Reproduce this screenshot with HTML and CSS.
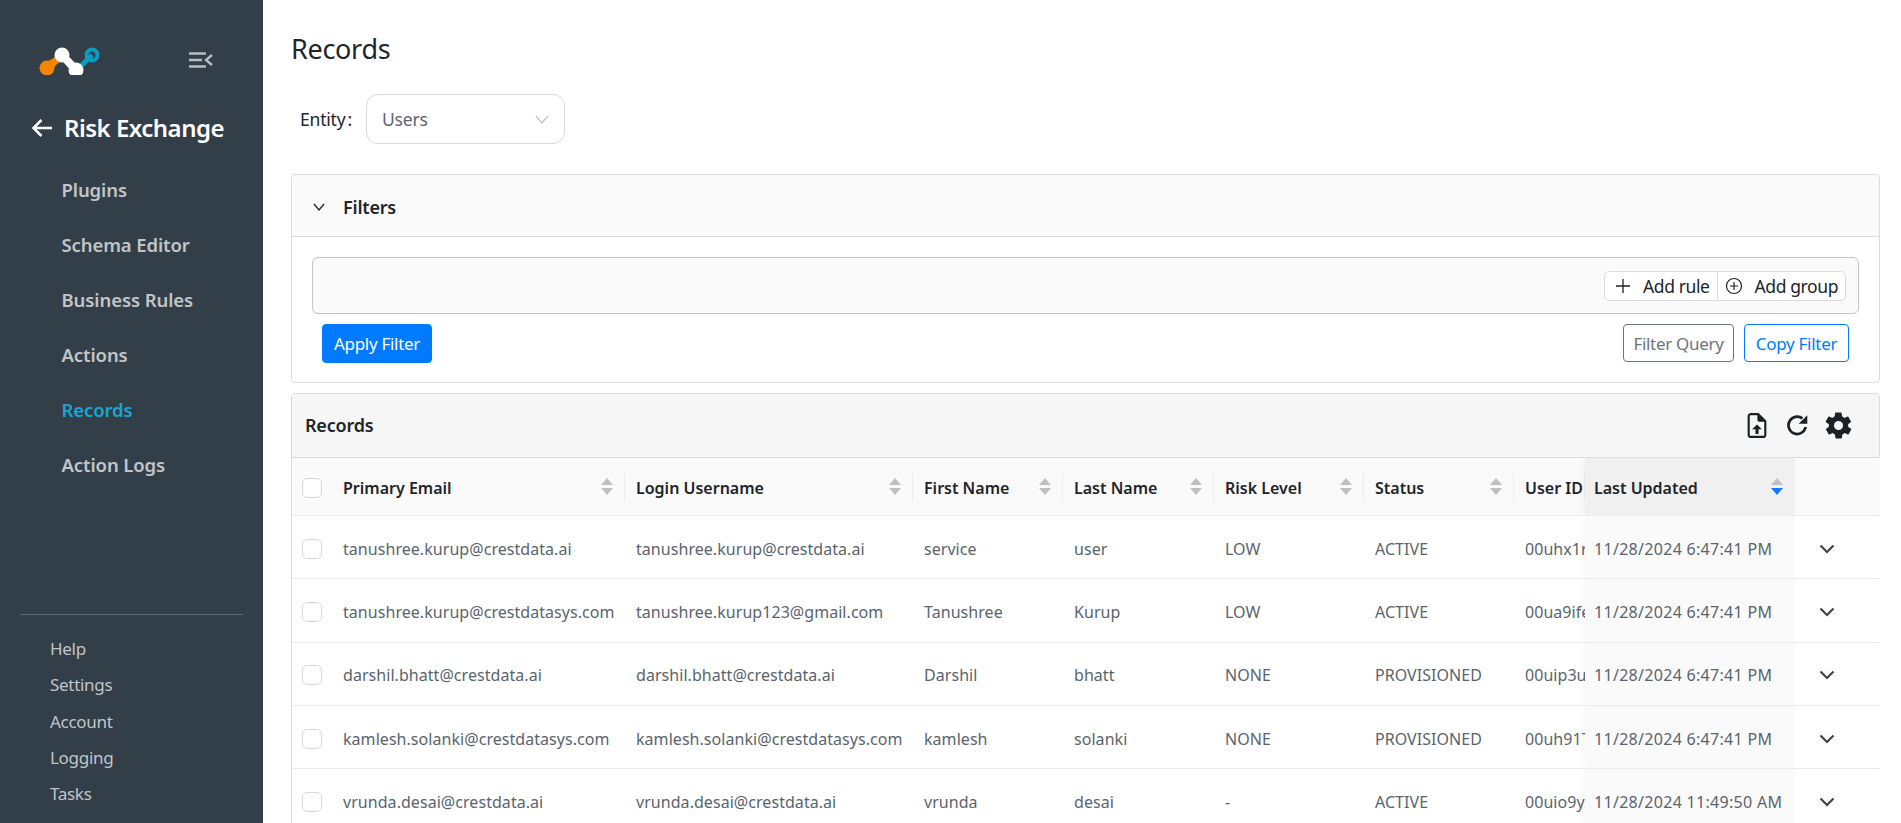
FILE: index.html
```html
<!DOCTYPE html>
<html lang="en">
<head>
<meta charset="utf-8">
<title>Records</title>
<link rel="stylesheet" href="styles.css">
</head>
<body>
<div class="app">
  <aside class="sidebar">
    <div class="brand">
      <svg class="logo" viewBox="0 0 62 30" width="62" height="30">
        <path d="M3.500 17 Q10 17 17 11 L21 17 Q14 21 13.500 28 Z" fill="#f58400"/>
        <circle cx="8" cy="23" r="7.500" fill="#f58400"/>
        <path d="M53 10 L42 21" stroke="#0a9dc4" stroke-width="5" fill="none"/>
        <circle cx="53" cy="10" r="5.500" fill="none" stroke="#0a9dc4" stroke-width="4"/>
        <path d="M23 10 L37 25" stroke="#fff" stroke-width="8" fill="none"/>
        <circle cx="23" cy="10" r="7.500" fill="#fff"/>
        <circle cx="37" cy="25" r="7.500" fill="#fff"/>
      </svg>
      <svg class="collapse" viewBox="0 0 24 16" width="24" height="16">
        <path d="M0 1.500H17M0 8H13M0 14.500H17" stroke="#b9bdc0" stroke-width="2.500" fill="none"/>
        <path d="M23 3 L17 8 L23 13" stroke="#b9bdc0" stroke-width="2.400" fill="none"/>
      </svg>
    </div>
    <div class="section-title">
      <svg viewBox="0 0 22 20" width="22" height="20"><path d="M21 10H2.500M10.500 2L2.500 10L10.500 18" stroke="#fff" stroke-width="2.500" fill="none"/></svg>
      <span>Risk Exchange</span>
    </div>
    <nav class="nav">
      <a class="nav-item">Plugins</a>
      <a class="nav-item">Schema Editor</a>
      <a class="nav-item">Business Rules</a>
      <a class="nav-item">Actions</a>
      <a class="nav-item active">Records</a>
      <a class="nav-item">Action Logs</a>
    </nav>
    <div class="secondary">
      <a class="sub-item">Help</a>
      <a class="sub-item">Settings</a>
      <a class="sub-item">Account</a>
      <a class="sub-item">Logging</a>
      <a class="sub-item">Tasks</a>
      <a class="sub-item">Vendors</a>
    </div>
  </aside>
  <main class="main">
    <h1 class="page-title">Records</h1>
    <div class="entity-row">
      <label class="entity-label">Entity<span class="colon">:</span></label>
      <div class="select">
        <span>Users</span>
        <svg viewBox="0 0 14 9" width="14" height="9"><path d="M1 1L7 8L13 1" stroke="#c4c4c4" stroke-width="1.200" fill="none"/></svg>
      </div>
    </div>
    <section class="card filters">
      <header class="filters-head">
        <svg viewBox="0 0 12 8" width="12" height="8"><path d="M1 1L6 7L11 1" stroke="#222" stroke-width="1.300" fill="none"/></svg>
        <span>Filters</span>
      </header>
      <div class="filters-body">
        <div class="query">
          <div class="btn-group">
            <button class="group-btn">
              <svg viewBox="0 0 16 16" width="16" height="16"><path d="M8 1V15M1 8H15" stroke="#222" stroke-width="1.300" fill="none"/></svg>
              <span>Add rule</span>
            </button>
            <button class="group-btn">
              <svg viewBox="0 0 18 18" width="18" height="18"><circle cx="9" cy="9" r="7.500" stroke="#222" stroke-width="1.200" fill="none"/><path d="M9 5V13M5 9H13" stroke="#222" stroke-width="1.200" fill="none"/></svg>
              <span>Add group</span>
            </button>
          </div>
        </div>
        <div class="filter-actions">
          <button class="btn primary">Apply Filter</button>
          <div class="filter-right">
            <button class="btn outline-grey">Filter Query</button>
            <button class="btn outline-blue">Copy Filter</button>
          </div>
        </div>
      </div>
    </section>
    <section class="card records">
      <header class="records-head">
        <span class="records-title">Records</span>
        <div class="tools">
          <svg class="tool-file" viewBox="0 0 384 512" width="20" height="25"><path fill="#1d2125" d="M64 0C29 0 0 29 0 64v384c0 35 29 64 64 64h256c35 0 64-29 64-64V160L224 0H64zm0 44h136v96c0 22 18 40 40 40h100v268c0 11-9 20-20 20H64c-11 0-20-9-20-20V64c0-11 9-20 20-20zm128 190L92 334h68v96h64v-96h68L192 234z"/></svg>
          <svg class="tool-refresh" viewBox="0 0 24 24" width="26" height="26"><path fill="none" stroke="#1d2125" stroke-width="2.500" d="M20 13a8 8 0 1 1-3-8"/><path fill="#1d2125" d="M21.500 2v8h-8z"/></svg>
          <svg viewBox="0 0 24 24" width="31" height="31"><path fill="#1d2125" d="M19.400 13c.1-.3.1-.7.1-1s0-.7-.1-1l2.100-1.600c.2-.2.200-.4.100-.6l-2-3.500c-.1-.2-.4-.3-.6-.2l-2.500 1c-.5-.4-1.100-.7-1.700-1l-.4-2.600c0-.3-.2-.5-.5-.5h-4c-.2 0-.5.200-.5.400l-.4 2.700c-.6.200-1.200.6-1.700 1l-2.500-1c-.2-.1-.5 0-.6.200l-2 3.500c-.1.200-.1.500.1.600L4.600 11c0 .3-.1.700-.1 1s0 .7.100 1l-2.100 1.600c-.2.200-.2.400-.1.600l2 3.500c.1.200.4.300.6.200l2.500-1c.5.400 1.100.700 1.700 1l.4 2.600c0 .3.300.5.500.5h4c.2 0 .5-.2.500-.4l.4-2.700c.6-.2 1.200-.6 1.700-1l2.500 1c.2.100.5 0 .6-.2l2-3.500c.1-.2.100-.5-.1-.6L19.400 13zM12 15.500a3.500 3.500 0 1 1 0-7 3.500 3.500 0 0 1 0 7z"/></svg>
        </div>
      </header>
      <div class="table">
        <div class="row head">
          <div class="cell check"><span class="box"></span></div>
          <div class="cell email"><b>Primary Email</b><i class="sort"></i></div>
          <div class="cell login"><b>Login Username</b><i class="sort"></i></div>
          <div class="cell first"><b>First Name</b><i class="sort"></i></div>
          <div class="cell last"><b>Last Name</b><i class="sort"></i></div>
          <div class="cell risk"><b>Risk Level</b><i class="sort"></i></div>
          <div class="cell status"><b>Status</b><i class="sort"></i></div>
          <div class="cell uid"><b>User ID</b></div>
          <div class="cell updated sorted"><b>Last Updated</b><i class="sort desc"></i></div>
          <div class="cell more"></div>
        </div>
        <div class="row">
          <div class="cell check"><span class="box"></span></div>
          <div class="cell email">tanushree.kurup@crestdata.ai</div>
          <div class="cell login">tanushree.kurup@crestdata.ai</div>
          <div class="cell first">service</div>
          <div class="cell last">user</div>
          <div class="cell risk">LOW</div>
          <div class="cell status">ACTIVE</div>
          <div class="cell uid">00uhx1rk8dGb</div>
          <div class="cell updated">11/28/2024 6:47:41 PM</div>
          <div class="cell more"><svg viewBox="0 0 16 10" width="16" height="10"><path d="M1.500 1.500L8 8L14.500 1.500" stroke="#444" stroke-width="2.200" fill="none"/></svg></div>
        </div>
        <div class="row">
          <div class="cell check"><span class="box"></span></div>
          <div class="cell email">tanushree.kurup@crestdatasys.com</div>
          <div class="cell login">tanushree.kurup123@gmail.com</div>
          <div class="cell first">Tanushree</div>
          <div class="cell last">Kurup</div>
          <div class="cell risk">LOW</div>
          <div class="cell status">ACTIVE</div>
          <div class="cell uid">00ua9ifeX2bk</div>
          <div class="cell updated">11/28/2024 6:47:41 PM</div>
          <div class="cell more"><svg viewBox="0 0 16 10" width="16" height="10"><path d="M1.500 1.500L8 8L14.500 1.500" stroke="#444" stroke-width="2.200" fill="none"/></svg></div>
        </div>
        <div class="row">
          <div class="cell check"><span class="box"></span></div>
          <div class="cell email">darshil.bhatt@crestdata.ai</div>
          <div class="cell login">darshil.bhatt@crestdata.ai</div>
          <div class="cell first">Darshil</div>
          <div class="cell last">bhatt</div>
          <div class="cell risk">NONE</div>
          <div class="cell status">PROVISIONED</div>
          <div class="cell uid">00uip3uXk2Lm</div>
          <div class="cell updated">11/28/2024 6:47:41 PM</div>
          <div class="cell more"><svg viewBox="0 0 16 10" width="16" height="10"><path d="M1.500 1.500L8 8L14.500 1.500" stroke="#444" stroke-width="2.200" fill="none"/></svg></div>
        </div>
        <div class="row">
          <div class="cell check"><span class="box"></span></div>
          <div class="cell email">kamlesh.solanki@crestdatasys.com</div>
          <div class="cell login">kamlesh.solanki@crestdatasys.com</div>
          <div class="cell first">kamlesh</div>
          <div class="cell last">solanki</div>
          <div class="cell risk">NONE</div>
          <div class="cell status">PROVISIONED</div>
          <div class="cell uid">00uh91Tk2Lm</div>
          <div class="cell updated">11/28/2024 6:47:41 PM</div>
          <div class="cell more"><svg viewBox="0 0 16 10" width="16" height="10"><path d="M1.500 1.500L8 8L14.500 1.500" stroke="#444" stroke-width="2.200" fill="none"/></svg></div>
        </div>
        <div class="row">
          <div class="cell check"><span class="box"></span></div>
          <div class="cell email">vrunda.desai@crestdata.ai</div>
          <div class="cell login">vrunda.desai@crestdata.ai</div>
          <div class="cell first">vrunda</div>
          <div class="cell last">desai</div>
          <div class="cell risk">-</div>
          <div class="cell status">ACTIVE</div>
          <div class="cell uid">00uio9yXk2Lm</div>
          <div class="cell updated">11/28/2024 11:49:50 AM</div>
          <div class="cell more"><svg viewBox="0 0 16 10" width="16" height="10"><path d="M1.500 1.500L8 8L14.500 1.500" stroke="#444" stroke-width="2.200" fill="none"/></svg></div>
        </div>
      </div>
    </section>
  </main>
</div>
</body>
</html>
```
FILE: styles.css
```css
* { box-sizing: border-box; }
html, body { margin: 0; height: 100%; overflow: hidden; background: #fff; }
body { font-family: "Noto Sans", "Open Sans", sans-serif; font-size: 16px; color: #212529; }
.app { display: flex; height: 823px; overflow: hidden; }

.sidebar { width: 263px; flex: none; background: #323e48; display: flex; flex-direction: column; overflow: hidden; position: relative; }
.brand { display: flex; align-items: center; height: 30px; margin: 45px 0 0 39px; }
.collapse { margin-left: 88px; }
.section-title { display: flex; align-items: center; gap: 11px; margin: 37px 0 0 31px; color: #fff; font-size: 24px; font-weight: 600; line-height: 32px; letter-spacing: -0.5px; }
.nav { display: flex; flex-direction: column; margin-top: 18px; padding-left: 61.500px; }
.nav-item { height: 55px; line-height: 55px; font-size: 18.500px; font-weight: 600; color: #c2c5c7; letter-spacing: -0.1px; }
.nav-item.active { color: #1aa6cf; }
.secondary { position: absolute; left: 20px; right: 20px; top: 614px; border-top: 1px solid #5d6872; padding: 16px 0 0 30px; display: flex; flex-direction: column; }
.sub-item { height: 36.300px; line-height: 36.300px; font-size: 17px; color: #c2c5c7; letter-spacing: -0.3px; }

.main { flex: 1; min-width: 0; padding: 30px 21px 0 28px; overflow: hidden; }
.page-title { margin: 0; font-size: 27px; font-weight: 400; line-height: 38px; color: #212529; letter-spacing: -0.3px; }
.entity-row { display: flex; align-items: center; margin: 26px 0 0 9px; height: 50px; }
.entity-label { font-size: 17.500px; width: 66px; letter-spacing: -0.2px; }
.colon { margin-left: 2px; }
.select { width: 199px; height: 50px; border: 1px solid #d9d9d9; border-radius: 12px; display: flex; align-items: center; justify-content: space-between; padding: 0 15px; color: #5c6670; font-size: 17.500px; letter-spacing: -0.2px; }

.card { border: 1px solid #dcdcdc; border-radius: 4px; background: #fff; }
.filters { margin-top: 30px; height: 209px; }
.filters-head { height: 62px; background: #fafafa; border-bottom: 1px solid #dcdcdc; border-radius: 4px 4px 0 0; display: flex; align-items: center; gap: 18px; padding: 2px 0 0 21px; font-size: 18px; font-weight: 600; letter-spacing: -0.2px; }
.filters-body { padding: 20px 20px 0; }
.query { height: 57px; border: 1px solid #c4c4c4; border-radius: 6px; background: #fafafa; display: flex; align-items: center; justify-content: flex-end; padding-right: 12px; }
.btn-group { display: flex; height: 30px; background: #fff; border: 1px solid #dcdcdc; border-radius: 5px; }
.group-btn { display: flex; align-items: center; gap: 12px; border: 0; background: none; font: inherit; font-size: 17.500px; color: #212529; padding: 0 7px 0 10px; letter-spacing: -0.4px; }
.group-btn + .group-btn { border-left: 1px solid #dcdcdc; padding-left: 7px; }
.filter-actions { display: flex; justify-content: space-between; margin: 10px 10px 0 10px; }
.btn { height: 38px; border-radius: 4px; font: inherit; font-size: 17px; padding: 0 10px; background: #fff; letter-spacing: -0.3px; }
.primary { background: #007bff; border: 1px solid #007bff; color: #fff; height: 39px; width: 110px; padding: 0; }
.filter-right { display: flex; gap: 10px; }
.outline-grey { border: 1px solid #6c757d; color: #6c757d; width: 111px; padding: 0; }
.outline-blue { border: 1px solid #007bff; color: #007bff; width: 105px; padding: 0; }

.records { margin-top: 10px; border-bottom: 0; }
.records-head { height: 64px; background: #f6f6f6; border-bottom: 1px solid #dcdcdc; display: flex; align-items: center; justify-content: space-between; padding: 0 25px 0 13px; }
.records-title { font-size: 18px; font-weight: 600; letter-spacing: -0.2px; margin-top: -2px; }
.tools { display: flex; align-items: center; gap: 13px; }
.tool-file { margin-right: 4px; }

.row { display: grid; grid-template-columns: 42px 291px 288px 150px 151px 150px 150px 71px 210px 85px; height: 63.300px; border-bottom: 1px solid #ebebeb; color: #5a646d; font-size: 16px; letter-spacing: 0.05px; }
.row.head { height: 58px; background: #fafafa; color: #212529; position: relative; }
.cell { display: flex; align-items: center; min-width: 0; padding: 3px 0 0 11px; overflow: hidden; white-space: nowrap; position: relative; background: inherit; }
.cell.check { padding-left: 10px; }
.cell.email { padding-left: 9px; }
.cell b { font-weight: 600; letter-spacing: 0; }
.box { width: 20px; height: 20px; border: 1px solid #d9d9d9; border-radius: 5px; background: #fff; }
.head .cell:not(.check):not(.updated):not(.more)::after { content: ""; position: absolute; right: 0; top: 15px; height: 28px; width: 1px; background: #ededed; }
.sort { position: absolute; right: 12px; top: 50%; margin-top: -9px; width: 12px; height: 17px; }
.sort::before, .sort::after { content: ""; position: absolute; left: 0; border-left: 6px solid transparent; border-right: 6px solid transparent; }
.sort::before { top: 0; border-bottom: 7px solid #bfbfbf; }
.sort::after { bottom: 0; border-top: 7px solid #bfbfbf; }
.sort.desc::after { border-top-color: #1677ff; }
.updated { background: #fafafa; box-shadow: -6px 0 6px -4px rgba(0,0,0,0.04); padding-left: 9px; letter-spacing: 0.3px; }
.sorted { background: #f0f0f0; }
.more { background: #fff; padding-left: 24px; }
.head .more { background: #fafafa; }
```
